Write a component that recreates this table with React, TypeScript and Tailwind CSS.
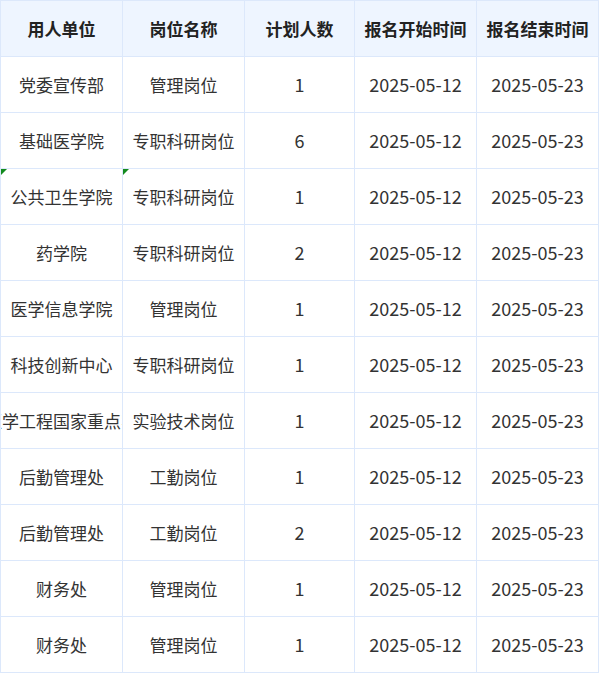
import React from 'react';

interface Post {
  unit: string;
  post: string;
  count: number;
  start: string;
  end: string;
  flagged?: boolean;
}

const headers = ['用人单位', '岗位名称', '计划人数', '报名开始时间', '报名结束时间'];

const posts: Post[] = [
  { unit: '党委宣传部', post: '管理岗位', count: 1, start: '2025-05-12', end: '2025-05-23' },
  { unit: '基础医学院', post: '专职科研岗位', count: 6, start: '2025-05-12', end: '2025-05-23' },
  { unit: '公共卫生学院', post: '专职科研岗位', count: 1, start: '2025-05-12', end: '2025-05-23', flagged: true },
  { unit: '药学院', post: '专职科研岗位', count: 2, start: '2025-05-12', end: '2025-05-23' },
  { unit: '医学信息学院', post: '管理岗位', count: 1, start: '2025-05-12', end: '2025-05-23' },
  { unit: '科技创新中心', post: '专职科研岗位', count: 1, start: '2025-05-12', end: '2025-05-23' },
  { unit: '生物医学工程国家重点实验室', post: '实验技术岗位', count: 1, start: '2025-05-12', end: '2025-05-23' },
  { unit: '后勤管理处', post: '工勤岗位', count: 1, start: '2025-05-12', end: '2025-05-23' },
  { unit: '后勤管理处', post: '工勤岗位', count: 2, start: '2025-05-12', end: '2025-05-23' },
  { unit: '财务处', post: '管理岗位', count: 1, start: '2025-05-12', end: '2025-05-23' },
  { unit: '财务处', post: '管理岗位', count: 1, start: '2025-05-12', end: '2025-05-23' },
];

const Cell: React.FC<{ children: React.ReactNode; head?: boolean; flag?: boolean; num?: boolean }> = ({
  children,
  head,
  flag,
  num,
}) => (
  <div
    className={`relative flex h-[56px] items-center justify-center overflow-hidden whitespace-nowrap border-b border-r border-[#dce8fb] ${
      head ? 'bg-[#eef5ff] font-bold text-[#222]' : 'bg-white text-[#333]'
    } ${num ? 'text-[18px]' : ''}`}
  >
    {flag && (
      <span className="absolute left-0 top-0 h-0 w-0 border-r-[6px] border-t-[6px] border-r-transparent border-t-[#138a1e]" />
    )}
    <span className="shrink-0">{children}</span>
  </div>
);

const App: React.FC = () => {
  return (
    <div
      className="grid w-[599px] grid-cols-[122px_122px_110px_122px_122px] border-l border-t border-[#dce8fb] text-[17px]"
      style={{ fontFamily: '"Noto Sans CJK SC", "Noto Sans", sans-serif' }}
    >
      {headers.map((h) => (
        <Cell key={h} head>
          {h}
        </Cell>
      ))}
      {posts.map((p, i) => (
        <React.Fragment key={i}>
          <Cell flag={p.flagged}>{p.unit}</Cell>
          <Cell flag={p.flagged}>{p.post}</Cell>
          <Cell num>{p.count}</Cell>
          <Cell num>{p.start}</Cell>
          <Cell num>{p.end}</Cell>
        </React.Fragment>
      ))}
    </div>
  );
};

export default App;
